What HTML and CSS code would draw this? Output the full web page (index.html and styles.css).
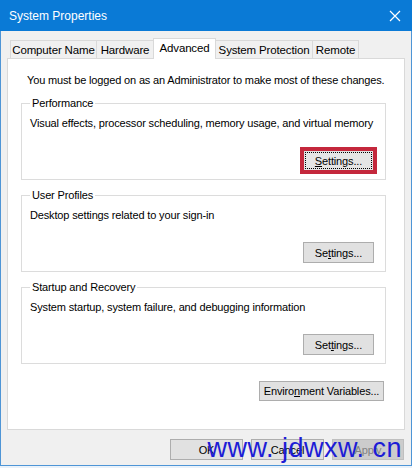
FILE: index.html
```html
<!DOCTYPE html>
<html lang="en">
<head>
    <meta charset="UTF-8">
    <meta name="viewport" content="width=device-width, initial-scale=1.0">
    <title>System Properties</title>
    <link rel="stylesheet" href="styles.css">
</head>
<body>
    <div class="window">
        <div class="titlebar">
            <span class="title">System Properties</span>
            <svg class="close" width="12" height="12" viewBox="0 0 12 12">
                <path d="M1 1 L11 11 M11 1 L1 11" stroke="#fff" stroke-width="1.2" fill="none"/>
            </svg>
        </div>

        <div class="body">
            <div class="tabs">
                <div class="tab tab-name">Computer Name</div>
                <div class="tab tab-hw">Hardware</div>
                <div class="tab tab-adv active">Advanced</div>
                <div class="tab tab-prot">System Protection</div>
                <div class="tab tab-remote">Remote</div>
            </div>

            <div class="panel">
                <p class="note">You must be logged on as an Administrator to make most of these changes.</p>

                <fieldset class="group">
                    <legend>Performance</legend>
                    <p class="desc">Visual effects, processor scheduling, memory usage, and virtual memory</p>
                    <div class="btn-row">
                        <button class="btn focused"><span class="focus-box"><u>S</u>ettings...</span></button>
                    </div>
                </fieldset>

                <fieldset class="group">
                    <legend>User Profiles</legend>
                    <p class="desc">Desktop settings related to your sign-in</p>
                    <div class="btn-row">
                        <button class="btn">Se<u>t</u>tings...</button>
                    </div>
                </fieldset>

                <fieldset class="group">
                    <legend>Startup and Recovery</legend>
                    <p class="desc">System startup, system failure, and debugging information</p>
                    <div class="btn-row">
                        <button class="btn">Set<u>t</u>ings...</button>
                    </div>
                </fieldset>

                <div class="env-row">
                    <button class="btn btn-env">Enviro<u>n</u>ment Variables...</button>
                </div>
            </div>

            <div class="footer">
                <button class="btn btn-foot">OK</button>
                <button class="btn btn-foot">Cancel</button>
                <button class="btn btn-foot disabled">Apply</button>
                <span class="watermark">www. jdwxw. cn</span>
            </div>
        </div>
    </div>
</body>
</html>
```

FILE: styles.css
```css
* {
    box-sizing: border-box;
}
body {
    margin: 0;
    background-color: #eaf2fa;
    font-family: "Liberation Sans", Arial, sans-serif;
    font-size: 11px;
    letter-spacing: -0.15px;
    color: #000;
}
.window {
    width: 412px;
    height: 466px;
    display: flex;
    flex-direction: column;
    border-left: 1px solid #4e95d6;
    border-right: 1px solid #4e95d6;
    border-bottom: 1px solid #4e95d6;
}
.titlebar {
    height: 31px;
    background-color: #0a7ad6;
    color: #fff;
    display: flex;
    align-items: center;
    justify-content: space-between;
    padding: 0 10px 0 9px;
    margin: 0 -1px;
}
.title {
    font-size: 12px;
    letter-spacing: 0;
}
.close {
    margin-right: 1px;
}
.body {
    flex: 1;
    background-color: #f0f0f0;
    padding: 7px 6px 0 6px;
    display: flex;
    flex-direction: column;
}

/* tabs */
.tabs {
    display: flex;
    align-items: flex-end;
    padding-left: 3px;
    height: 20px;
    position: relative;
    z-index: 1;
}
.tab {
    height: 18px;
    border: 1px solid #d9d9d9;
    border-bottom: none;
    border-right: none;
    background-color: #f0f0f0;
    display: flex;
    align-items: center;
    justify-content: center;
    white-space: nowrap;
    font-size: 11.5px;
}
.tab-name { width: 86px; }
.tab-hw { width: 57px; }
.tab-adv { width: 63px; }
.tab-prot { width: 96px; }
.tab-remote { width: 47px; border-right: 1px solid #d9d9d9; }
.tab.active {
    height: 21px;
    margin-bottom: -1px;
    background-color: #fff;
    border-right: 1px solid #d9d9d9;
    padding-bottom: 3px;
}
.tab.active + .tab {
    border-left: none;
}

/* panel */
.panel {
    background-color: #fff;
    border: 1px solid #d9d9d9;
    height: 372px;
    padding: 13px 18px 0 13px;
}
.note {
    margin: 0 0 7px 6px;
    line-height: 16px;
    white-space: nowrap;
}
.group {
    margin: 0 0 7px 0;
    padding: 0 11px 8px 8px;
    border: 1px solid #dcdcdc;
}
.group legend {
    padding: 0 2px;
    margin-left: 0;
    line-height: 16px;
}
.desc {
    margin: 4px 0 0 0;
    line-height: 16px;
    white-space: nowrap;
}
.btn-row {
    display: flex;
    justify-content: flex-end;
    margin-top: 19px;
}
.btn {
    font-family: inherit;
    font-size: 11px;
    letter-spacing: -0.15px;
    background-color: #e1e1e1;
    border: 1px solid #adadad;
    color: #000;
    height: 21px;
    width: 71px;
    padding: 0;
    display: flex;
    align-items: center;
    justify-content: center;
    white-space: nowrap;
}
.btn.focused {
    outline: 3px solid #c4283c;
    outline-offset: 0;
    border-color: #c4283c;
    padding: 1px;
}
.focus-box {
    border: 1px dotted #000;
    width: 100%;
    height: 100%;
    display: flex;
    align-items: center;
    justify-content: center;
    background-color: #e5e5e5;
}
.env-row {
    display: flex;
    justify-content: flex-end;
    margin-top: 17px;
    padding-right: 2px;
}
.btn-env {
    width: 125px;
    height: 20px;
}

/* footer */
.footer {
    display: flex;
    justify-content: flex-end;
    gap: 8px;
    margin-top: 9px;
    padding-right: 1px;
    position: relative;
}
.btn-foot {
    width: 73px;
    height: 21px;
}
.btn-foot.disabled {
    width: 72px;
    background-color: #cccccc;
    border-color: #bfbfbf;
    color: #838383;
}
.watermark {
    position: absolute;
    right: 3px;
    top: -6px;
    font-family: "Liberation Sans", sans-serif;
    font-size: 27px;
    color: #1c1cd6;
    letter-spacing: 0.5px;
    white-space: nowrap;
}
```
